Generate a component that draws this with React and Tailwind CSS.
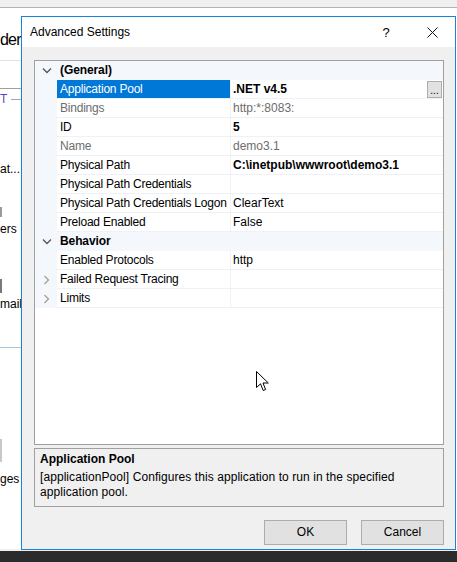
import { Fragment } from "react";

const FONT = { fontFamily: '"Liberation Sans", Arial, sans-serif' };

// property grid rows, top to bottom
const ROWS = [
    { cat: true, label: "(General)" },
    { label: "Application Pool", value: ".NET v4.5", bold: true, selected: true },
    { label: "Bindings", value: "http:*:8083:", dim: true },
    { label: "ID", value: "5", bold: true },
    { label: "Name", value: "demo3.1", dim: true },
    { label: "Physical Path", value: "C:\\inetpub\\wwwroot\\demo3.1", bold: true },
    { label: "Physical Path Credentials", value: "" },
    { label: "Physical Path Credentials Logon", value: "ClearText" },
    { label: "Preload Enabled", value: "False" },
    { cat: true, label: "Behavior" },
    { label: "Enabled Protocols", value: "http" },
    { label: "Failed Request Tracing", value: "", collapsed: true },
    { label: "Limits", value: "", collapsed: true },
];

function ChevronDown() {
    return (
        <svg width="10" height="6" viewBox="0 0 10 6" className="text-[#555]">
            <path d="M1 0.5 L5 4.5 L9 0.5" fill="none" stroke="currentColor" strokeWidth="1.3" />
        </svg>
    );
}

function ChevronRight() {
    return (
        <svg width="6" height="10" viewBox="0 0 6 10" className="text-[#a0a0a0]">
            <path d="M0.5 1 L4.5 5 L0.5 9" fill="none" stroke="currentColor" strokeWidth="1.3" />
        </svg>
    );
}

function GridRow({ row }) {
    if (row.cat) {
        return (
            <div className="flex h-[19px] items-center bg-[#f4f7fc]">
                <div className="flex w-[22px] justify-center pl-[2px]">
                    <ChevronDown />
                </div>
                <div className="pl-[3px] font-bold tracking-[-0.1px] text-black">{row.label}</div>
            </div>
        );
    }
    return (
        <div className="flex h-[19px]">
            <div className="flex w-[22px] items-center justify-center bg-[#f4f7fc] pl-[2px]">
                {row.collapsed && <ChevronRight />}
            </div>
            <div
                className={`flex w-[174px] items-center overflow-hidden border-r border-b border-[#eef1f6] pl-[3px] tracking-[-0.22px] whitespace-nowrap ${
                    row.selected ? "bg-[#0078d7] text-white" : row.dim ? "text-[#6d6d6d]" : "text-black"
                }`}
            >
                {row.label}
            </div>
            <div
                className={`flex flex-1 items-center justify-between border-b border-[#eef1f6] pl-[2px] pr-[1px] whitespace-nowrap ${
                    row.dim ? "text-[#6d6d6d]" : "text-black"
                } ${row.bold ? "font-bold" : ""}`}
            >
                <span>{row.value}</span>
                {row.selected && (
                    <span className="flex h-[17px] w-[15px] items-end justify-center border border-[#adadad] bg-[#e1e1e1] pb-[1px] text-[10px] leading-[10px] font-normal">
                        ...
                    </span>
                )}
            </div>
        </div>
    );
}

function BackgroundStrip() {
    // the window behind the dialog, only its right-hand sliver is visible
    return (
        <div className="flex w-[21px] flex-col overflow-hidden text-[12px] text-black">
            <div className="flex h-[52px] items-end whitespace-nowrap pb-[10px] text-[16px] leading-[20px] tracking-[-0.8px]">
                der
            </div>
            <div className="h-[1px] bg-[#e3e3e3]" />
            <div className="h-[27px]" />
            <div className="h-[1px] bg-[#a0a0a0]" />
            <div className="flex h-[20px] items-center gap-[4px] whitespace-nowrap">
                <span className="text-[#5b3fc4]">T</span>
                <span className="h-[1px] w-[10px] bg-[#9aa8c4]" />
            </div>
            <div className="h-[53px]" />
            <div className="flex h-[15px] whitespace-nowrap">at...</div>
            <div className="h-[30px]" />
            <div className="h-[10px] w-[2px] bg-[#9a9a9a]" />
            <div className="h-[5px]" />
            <div className="flex h-[15px] whitespace-nowrap">ers</div>
            <div className="h-[42px]" />
            <div className="h-[14px] w-[2px] bg-[#7a7a7a]" />
            <div className="h-[4px]" />
            <div className="flex h-[15px] whitespace-nowrap">mail</div>
            <div className="h-[35px]" />
            <div className="h-[1px] bg-[#a8c4e8]" />
            <div className="h-[91px]" />
            <div className="h-[23px] w-[2px] bg-[#c8c8c8]" />
            <div className="h-[10px]" />
            <div className="flex h-[15px] whitespace-nowrap">ges</div>
        </div>
    );
}

export default function App() {
    return (
        <div
            className="relative flex h-[562px] w-[457px] flex-col overflow-hidden bg-white text-[12px] leading-[15px]"
            style={FONT}
        >
            {/* window behind */}
            <div className="h-[8px] border-b border-[#b4b4b4] bg-[#f0f0f0]" />
            <div className="flex flex-1">
                <BackgroundStrip />
            </div>
            <div className="h-[2px] bg-[#f0f0f0]" />
            <div className="h-[11px] bg-[#2b2b2b]" />

            {/* Advanced Settings dialog */}
            <div className="absolute top-[16px] left-[21px] flex h-[534px] w-[435px] flex-col border border-[#1883d7] bg-[#f0f0f0]">
                <div className="flex h-[30px] items-center bg-white pl-[8px]">
                    <span className="flex-1 text-black">Advanced Settings</span>
                    <span className="flex h-[30px] w-[46px] items-center justify-center text-[13px] text-black">?</span>
                    <span className="flex h-[30px] w-[46px] items-center justify-center">
                        <svg width="11" height="11" viewBox="0 0 11 11">
                            <path d="M0.5 0.5 L10.5 10.5 M10.5 0.5 L0.5 10.5" stroke="#111" strokeWidth="1" />
                        </svg>
                    </span>
                </div>

                <div className="flex flex-1 flex-col pt-[13px] pr-[11px] pl-[12px]">
                    {/* property grid */}
                    <div className="flex h-[385px] flex-col border border-[#a0a0a0] bg-white">
                        {ROWS.map((row) => (
                            <Fragment key={row.label}>
                                <GridRow row={row} />
                            </Fragment>
                        ))}
                    </div>

                    {/* description */}
                    <div className="mt-[3px] h-[59px] border border-[#a0a0a0] bg-[#f0f0f0] px-[5px] pt-[3px] text-black">
                        <div className="mb-[3px] font-bold">Application Pool</div>
                        <div className="tracking-[0.07px]">
                            [applicationPool] Configures this application to run in the specified
                            <br />
                            application pool.
                        </div>
                    </div>

                    {/* buttons */}
                    <div className="mt-[13px] flex justify-end gap-[14px]">
                        <button className="h-[25px] w-[83px] border border-[#adadad] bg-[#e1e1e1] text-black">OK</button>
                        <button className="h-[25px] w-[83px] border border-[#adadad] bg-[#e1e1e1] text-black">Cancel</button>
                    </div>
                </div>
            </div>

            {/* mouse pointer */}
            <svg className="absolute top-[371px] left-[256px]" width="13" height="21" viewBox="0 0 13 21">
                <path
                    d="M0.5 0.5 L0.5 16.5 L4.5 12.8 L7.2 19.5 L9.6 18.5 L7 12 L12.3 12 Z"
                    fill="#fff"
                    stroke="#000"
                    strokeWidth="1"
                    strokeLinejoin="miter"
                />
            </svg>
        </div>
    );
}
